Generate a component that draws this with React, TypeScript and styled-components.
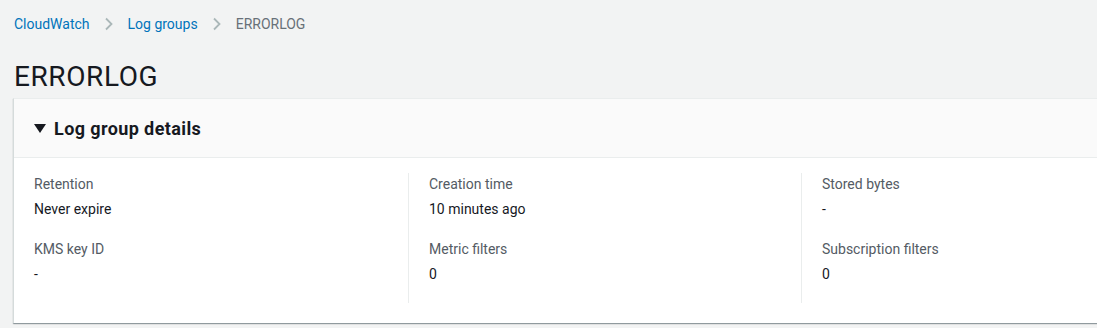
import React from "react";
import styled, { createGlobalStyle } from "styled-components";

const Global = createGlobalStyle`
  html, body { margin: 0; padding: 0; }
  body {
    background: #f2f3f3;
    font-family: Roboto, "Liberation Sans", Arial, sans-serif;
    color: #16191f;
    overflow: hidden;
    width: 1097px;
    height: 328px;
  }
`;

const Page = styled.div`
  padding: 13px 0 0 13px;
`;

const Breadcrumbs = styled.nav`
  display: flex;
  align-items: center;
  height: 22px;
  padding-left: 1px;
  font-size: 14px;
  line-height: 22px;
`;

const Crumb = styled.a`
  color: #0073bb;
  text-decoration: none;
`;

const CurrentCrumb = styled.span`
  color: #687078;
`;

const Sep = styled.span`
  display: inline-flex;
  width: 38px;
  justify-content: center;
  color: #aab7b8;
`;

const Title = styled.h1`
  margin: 24px 0 0 1px;
  font-size: 28px;
  line-height: 36px;
  font-weight: 400;
  letter-spacing: 0.6px;
  color: #16191f;
`;

const Panel = styled.section`
  margin-top: 3px;
  background: #fff;
  border-left: 1px solid #d5dbdb;
  border-top: 1px solid #eaeded;
  box-shadow: 0 1px 1px 0 rgba(0, 28, 36, 0.3), 1px 1px 1px 0 rgba(0, 28, 36, 0.15);
`;

const PanelHeader = styled.header`
  display: flex;
  align-items: center;
  gap: 8px;
  height: 58px;
  padding: 0 20px;
  background: #fafafa;
  border-bottom: 1px solid #eaeded;
  font-size: 18px;
  font-weight: 700;
  letter-spacing: 0.4px;
  color: #16191f;
`;

const Caret = styled.svg`
  width: 12px;
  height: 9px;
  margin-top: 1px;
`;

const Columns = styled.div`
  display: grid;
  grid-template-columns: 393px 393px 1fr;
  padding: 15px 0 20px 1px;
`;

const Column = styled.div<{ $first?: boolean }>`
  display: flex;
  flex-direction: column;
  gap: 18px;
  padding-left: ${(p) => (p.$first ? "19px" : "20px")};
  border-left: ${(p) => (p.$first ? "none" : "1px solid #eaeded")};
  padding-bottom: 18px;
`;

const Field = styled.div`
  display: flex;
  flex-direction: column;
  gap: 3px;
`;

const Label = styled.div`
  font-size: 14px;
  line-height: 22px;
  color: #545b64;
`;

const Value = styled.div`
  font-size: 14px;
  line-height: 22px;
  color: #16191f;
`;

const columns = [
  [
    ["Retention", "Never expire"],
    ["KMS key ID", "-"],
  ],
  [
    ["Creation time", "10 minutes ago"],
    ["Metric filters", "0"],
  ],
  [
    ["Stored bytes", "-"],
    ["Subscription filters", "0"],
  ],
];

const Chevron = () => (
  <svg width="10" height="14" viewBox="0 0 10 14" fill="none">
    <path d="M2 1.5 L7.5 7 L2 12.5" stroke="currentColor" strokeWidth="1.8" />
  </svg>
);

export default function App() {
  return (
    <>
      <Global />
      <Page>
        <Breadcrumbs>
          <Crumb href="#">CloudWatch</Crumb>
          <Sep>
            <Chevron />
          </Sep>
          <Crumb href="#">Log groups</Crumb>
          <Sep>
            <Chevron />
          </Sep>
          <CurrentCrumb>ERRORLOG</CurrentCrumb>
        </Breadcrumbs>
        <Title>ERRORLOG</Title>
        <Panel>
          <PanelHeader>
            <Caret viewBox="0 0 12 9">
              <path d="M0 0 H12 L6 9 Z" fill="#16191f" />
            </Caret>
            Log group details
          </PanelHeader>
          <Columns>
            {columns.map((col, i) => (
              <Column key={i} $first={i === 0}>
                {col.map(([k, v]) => (
                  <Field key={k}>
                    <Label>{k}</Label>
                    <Value>{v}</Value>
                  </Field>
                ))}
              </Column>
            ))}
          </Columns>
        </Panel>
      </Page>
    </>
  );
}
